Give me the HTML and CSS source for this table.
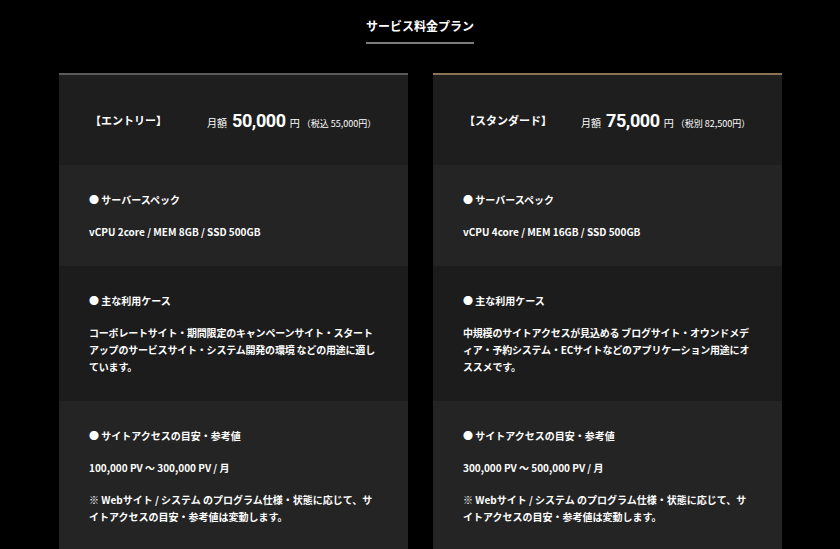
FILE: index.html
```html
<!DOCTYPE html>
<html lang="ja">
<head>
<meta charset="utf-8">
<title>サービス料金プラン</title>
<link rel="stylesheet" href="styles.css">
</head>
<body>
<section class="plans">
  <div class="title-wrap"><h2 class="title">サービス料金プラン</h2></div>
  <div class="cards">
    <article class="card card-entry">
      <div class="card-head">
        <div class="plan-name">【エントリー】</div>
        <div class="price"><span class="unit">月額</span><span class="amount">50,000</span><span class="yen">円</span><span class="tax">（税込 55,000円）</span></div>
      </div>
      <div class="block light">
        <p class="label">● サーバースペック</p>
        <p class="text">vCPU 2core / MEM 8GB / SSD 500GB</p>
      </div>
      <div class="block dark">
        <p class="label">● 主な利用ケース</p>
        <p class="text text-tight">コーポレートサイト・期間限定のキャンペーンサイト・スタートアップのサービスサイト・システム開発の環境 などの用途に適しています。</p>
      </div>
      <div class="block light">
        <p class="label">● サイトアクセスの目安・参考値</p>
        <p class="text">100,000 PV ～ 300,000 PV / 月</p>
        <p class="text">※ Webサイト / システム のプログラム仕様・状態に応じて、サイトアクセスの目安・参考値は変動します。</p>
      </div>
    </article>
    <article class="card card-standard">
      <div class="card-head">
        <div class="plan-name">【スタンダード】</div>
        <div class="price"><span class="unit">月額</span><span class="amount">75,000</span><span class="yen">円</span><span class="tax">（税別 82,500円）</span></div>
      </div>
      <div class="block light">
        <p class="label">● サーバースペック</p>
        <p class="text">vCPU 4core / MEM 16GB / SSD 500GB</p>
      </div>
      <div class="block dark">
        <p class="label">● 主な利用ケース</p>
        <p class="text text-tight">中規模のサイトアクセスが見込める ブログサイト・オウンドメディア・予約システム・ECサイトなどのアプリケーション用途にオススメです。</p>
      </div>
      <div class="block light">
        <p class="label">● サイトアクセスの目安・参考値</p>
        <p class="text">300,000 PV ～ 500,000 PV / 月</p>
        <p class="text">※ Webサイト / システム のプログラム仕様・状態に応じて、サイトアクセスの目安・参考値は変動します。</p>
      </div>
    </article>
  </div>
</section>
</body>
</html>
```
FILE: styles.css
```css
* { box-sizing: border-box; }
html, body {
  margin: 0;
  padding: 0;
  background: #000;
  color: #fff;
  font-family: "Noto Sans CJK JP", "Noto Sans", sans-serif;
}
.plans {
  padding-top: 12px;
}
.title-wrap {
  text-align: center;
}
.title {
  display: inline-block;
  margin: 0;
  font-size: 12px;
  line-height: 18px;
  font-weight: 700;
  padding-bottom: 7px;
  border-bottom: 2px solid #7d7d7d;
  color: #fff;
}
.cards {
  margin: 29px 0 0 59px;
  display: grid;
  grid-template-columns: 349px 349px;
  gap: 25px;
}
.card {
  border-top: 2px solid #5a5a5a;
}
.card-standard {
  border-top-color: #8a7252;
}
.card-head {
  height: 90px;
  background: #1e1e1e;
  display: flex;
  align-items: center;
  padding: 0 30px 0 31px;
}
.plan-name {
  width: 117px;
  font-size: 11px;
  font-weight: 700;
  white-space: nowrap;
}
.price {
  display: flex;
  align-items: baseline;
  white-space: nowrap;
}
.unit {
  font-size: 10px;
  margin-right: 5px;
}
.amount {
  font-family: Roboto, "Noto Sans CJK JP", sans-serif;
  font-size: 18px;
  font-weight: 700;
  letter-spacing: -0.4px;
}
.yen {
  font-size: 10px;
  margin-left: 4px;
}
.tax {
  font-size: 9px;
  margin-left: 2px;
}
.block {
  padding: 26px 29px 26px 30px;
}
.light { background: #242424; }
.dark { background: #1c1c1c; }
.label, .text {
  margin: 0;
  font-size: 10px;
  line-height: 17px;
  font-weight: 700;
}
.text {
  margin-top: 15px;
}
.text-tight {
  letter-spacing: -0.2px;
}
```
